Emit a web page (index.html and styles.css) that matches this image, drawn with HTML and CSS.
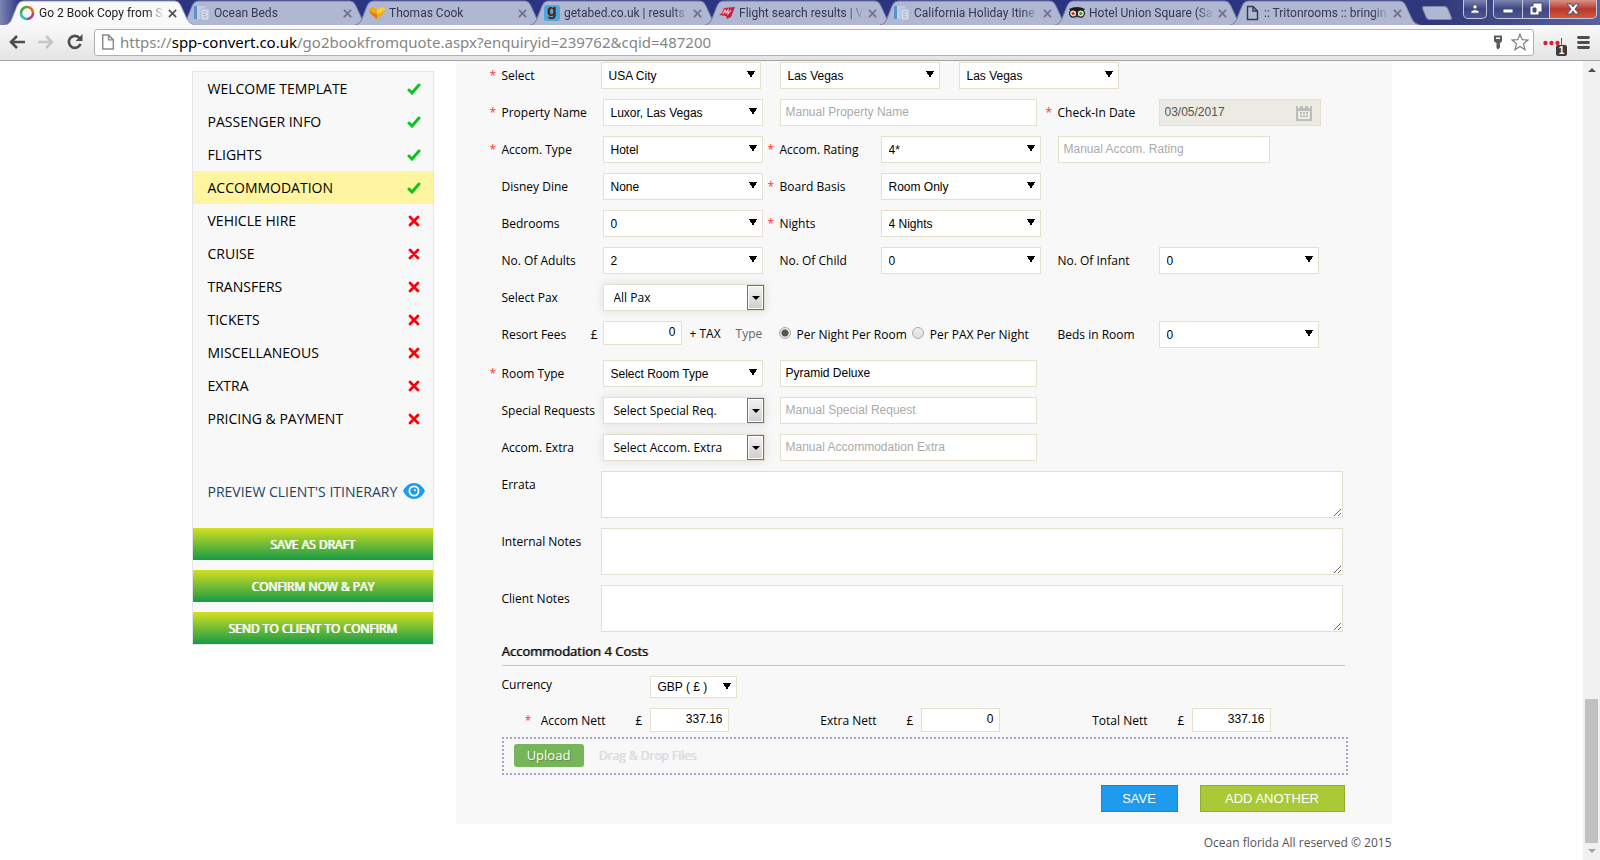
FILE: index.html
```html
<!DOCTYPE html>
<html lang="en">
<head>
  <meta charset="UTF-8">
  <meta name="viewport" content="width=device-width,initial-scale=1">
  <title>Go 2 Book Copy from Quote</title>
  <link rel="stylesheet" href="styles.css">
</head>
<body>

  <!-- Shared icons -->
  <svg class="defs" aria-hidden="true">
    <symbol id="tab-shape" viewBox="0 0 190 25">
      <path d="M0 25 C5 24 6 21 8 16 L12 6 Q14 1 18 1 H170 Q174 1 176 6 L182 19 Q184 24 190 25"/>
    </symbol>
    <symbol id="i-close" viewBox="0 0 10 10"><path d="M1 1 L9 9 M9 1 L1 9" fill="none" stroke="currentColor" stroke-width="2"/></symbol>
    <symbol id="i-doc" viewBox="0 0 16 16">
      <path d="M3.5 1.5 H9 L13.5 6 V14.5 H3.5 Z M9 1.5 V6 H13.5" fill="none" stroke="currentColor" stroke-width="1.4"/>
    </symbol>
    <symbol id="i-ocean" viewBox="0 0 16 16">
      <rect x="0" y="1" width="3" height="13" fill="#5b93c8"/>
      <rect x="3" y="1" width="8" height="13" fill="#c3cde2"/>
      <rect x="7" y="4" width="8" height="11" fill="#d3daea" stroke="#a9b5d0" stroke-width=".8"/>
      <path d="M9 7 H13 M9 9.500 H12 M9 12 H13" stroke="#a3b1cd"/>
    </symbol>
    <symbol id="i-tick" viewBox="0 0 14 12">
      <path d="M2 7 L5 10 L12 2" fill="none" stroke="#0bc41c" stroke-width="3" stroke-linecap="round"/>
    </symbol>
    <symbol id="i-cross" viewBox="0 0 14 12">
      <path d="M3 2 L11 10 M11 2 L3 10" fill="none" stroke="#fb0007" stroke-width="2.800" stroke-linecap="round"/>
    </symbol>
  </svg>

  <header class="chrome">
    <div class="tabstrip">
      <div class="tab active">
        <svg class="tab-bg"><use href="#tab-shape"/></svg>
        <svg class="fav" viewBox="0 0 16 16" fill="none" stroke-width="2.600">
          <path d="M8 2 A6 6 0 0 1 14 8" stroke="#e8632a"/><path d="M14 8 A6 6 0 0 1 8 14" stroke="#b5409a"/>
          <path d="M8 14 A6 6 0 0 1 2 8" stroke="#23c4c0"/><path d="M2 8 A6 6 0 0 1 8 2" stroke="#47a53c"/>
        </svg>
        <span class="tab-title">Go 2 Book Copy from S</span>
        <button class="tab-x" aria-label="Close tab"><svg><use href="#i-close"/></svg></button>
      </div>
      <div class="tab">
        <svg class="tab-bg"><use href="#tab-shape"/></svg>
        <svg class="fav"><use href="#i-ocean"/></svg>
        <span class="tab-title">Ocean Beds</span>
        <button class="tab-x" aria-label="Close tab"><svg><use href="#i-close"/></svg></button>
      </div>
      <div class="tab">
        <svg class="tab-bg"><use href="#tab-shape"/></svg>
        <svg class="fav" viewBox="0 0 16 16"><path d="M8 14 C4 11 0 9 0 5 Q1 2 4 2 Q7 3 8 5 Q9 3 12 2 Q16 2 16 5 C15 9 11 12 8 14Z" fill="#efaa1c"/><path d="M8 14 C5 11 1 9 0 5 Q3 8 8 9Z" fill="#dd7c1f"/><path d="M8 5 Q9 3 12 2 Q16 2 16 5 Q12 8 8 9Z" fill="#f6cf2a"/></svg>
        <span class="tab-title">Thomas Cook</span>
        <button class="tab-x" aria-label="Close tab"><svg><use href="#i-close"/></svg></button>
      </div>
      <div class="tab">
        <svg class="tab-bg"><use href="#tab-shape"/></svg>
        <span class="fav fav-g">g</span>
        <span class="tab-title">getabed.co.uk | results</span>
        <button class="tab-x" aria-label="Close tab"><svg><use href="#i-close"/></svg></button>
      </div>
      <div class="tab">
        <svg class="tab-bg"><use href="#tab-shape"/></svg>
        <svg class="fav" viewBox="0 0 16 16"><path d="M5 3 L16 2 L12 12 L8 14 L7 11 L0 10 L3 8Z" fill="#c6203f"/><path d="M4 9 L6 5 L7 8 L9 5 L9 9 L12 5" fill="none" stroke="#f3c3cc" stroke-width="1.200"/></svg>
        <span class="tab-title">Flight search results | V</span>
        <button class="tab-x" aria-label="Close tab"><svg><use href="#i-close"/></svg></button>
      </div>
      <div class="tab">
        <svg class="tab-bg"><use href="#tab-shape"/></svg>
        <svg class="fav"><use href="#i-ocean"/></svg>
        <span class="tab-title">California Holiday Itine</span>
        <button class="tab-x" aria-label="Close tab"><svg><use href="#i-close"/></svg></button>
      </div>
      <div class="tab">
        <svg class="tab-bg"><use href="#tab-shape"/></svg>
        <svg class="fav" viewBox="0 0 16 16"><path d="M0 4 Q8 0 16 4 L14 6 H2Z" fill="#1b1b1b"/><circle cx="4.200" cy="8.500" r="3.600" fill="#e8e3c5" stroke="#1b1b1b" stroke-width="1.200"/><circle cx="11.800" cy="8.500" r="3.600" fill="#e8e3c5" stroke="#1b1b1b" stroke-width="1.200"/><circle cx="4.200" cy="8.500" r="1.500" fill="#c0392b"/><circle cx="11.800" cy="8.500" r="1.500" fill="#3f8a3f"/><path d="M7 11 H9 L8 13Z" fill="#1b1b1b"/></svg>
        <span class="tab-title">Hotel Union Square (Sa</span>
        <button class="tab-x" aria-label="Close tab"><svg><use href="#i-close"/></svg></button>
      </div>
      <div class="tab">
        <svg class="tab-bg"><use href="#tab-shape"/></svg>
        <svg class="fav"><use href="#i-doc"/></svg>
        <span class="tab-title">:: Tritonrooms :: bringin</span>
        <button class="tab-x" aria-label="Close tab"><svg><use href="#i-close"/></svg></button>
      </div>
      <button class="new-tab" aria-label="New tab"></button>
      <div class="win-btns">
        <button class="win user" aria-label="User"><svg viewBox="0 0 12 12"><circle cx="6" cy="3.500" r="2.500"/><path d="M1 11 Q1 7 6 7 Q11 7 11 11Z"/></svg></button>
        <button class="win min" aria-label="Minimise"><svg viewBox="0 0 12 12"><path d="M1 6 H11 V10 H1Z"/></svg></button>
        <button class="win max" aria-label="Restore"><svg viewBox="0 0 12 12"><path d="M3 0 H12 V9 H9 V12 H0 V3 H3Z M3 5 V9 H6 V5Z" fill-rule="evenodd"/></svg></button>
        <button class="win close" aria-label="Close"><svg viewBox="0 0 12 12"><path d="M0 1 H4 L6 4 L8 1 H12 L8 6 L12 11 H8 L6 8 L4 11 H0 L4 6Z"/></svg></button>
      </div>
    </div>

    <div class="toolbar">
      <button class="nav-btn" aria-label="Back"><svg viewBox="0 0 16 16" fill="none" stroke="#4d4d4d" stroke-width="2.600"><path d="M8 2 L2 8 L8 14 M2 8 H16"/></svg></button>
      <button class="nav-btn" aria-label="Forward"><svg viewBox="0 0 16 16" fill="none" stroke="#c6c6c6" stroke-width="2.600"><path d="M8 2 L14 8 L8 14 M14 8 H0"/></svg></button>
      <button class="nav-btn" aria-label="Reload"><svg viewBox="0 0 16 16" fill="none" stroke="#4d4d4d" stroke-width="2.600"><path d="M13.500 10 A6 6 0 1 1 12.500 4"/><path d="M15.500 0 V7 H8.500Z" fill="#4d4d4d" stroke="none"/></svg></button>
      <div class="omnibox">
        <svg class="page-ico"><use href="#i-doc"/></svg>
        <div class="url">https://<b>spp-convert.co.uk</b>/go2bookfromquote.aspx?enquiryid=239762&amp;cqid=487200</div>
        <svg class="key" viewBox="0 0 10 14"><path d="M1 0 H9 V6 L7 7.500 V12 L5 14 L3.500 12.500 V7.500 L1 6Z M3 2 V3.500 H7 V2Z" fill="#5b5b5b" fill-rule="evenodd"/></svg>
        <svg class="star-ico" viewBox="0 0 18 18"><path d="M9 1.200 L11.200 6.700 L17 7.100 L12.500 10.800 L14 16.600 L9 13.400 L4 16.600 L5.500 10.800 L1 7.100 L6.800 6.700Z" fill="#fff" stroke="#7d7d7d" stroke-width="1.200"/></svg>
      </div>
      <button class="ext" aria-label="Password manager">
        <svg viewBox="0 0 20 12"><g fill="#d7262b"><circle cx="2.500" cy="7" r="2.200"/><circle cx="8.500" cy="7" r="2.200"/><circle cx="14.500" cy="7" r="2.200"/><path d="M18 2 H19 V12 H18Z"/></g></svg>
        <span class="ext-badge">1</span>
      </button>
      <button class="menu" aria-label="Menu"><svg viewBox="0 0 13 13"><path d="M1.500 1.500 H11.500 M1.500 6.500 H11.500 M1.500 11.500 H11.500" stroke="#4d4d4d" stroke-width="2.800" stroke-linecap="round"/></svg></button>
    </div>
  </header>

  <div class="viewport">
    <div class="page">
      <div class="container">

        <nav class="sidebar">
          <ul class="steps">
            <li><a href="#">WELCOME TEMPLATE</a><svg><use href="#i-tick"/></svg></li>
            <li><a href="#">PASSENGER INFO</a><svg><use href="#i-tick"/></svg></li>
            <li><a href="#">FLIGHTS</a><svg><use href="#i-tick"/></svg></li>
            <li class="current"><a href="#">ACCOMMODATION</a><svg><use href="#i-tick"/></svg></li>
            <li><a href="#">VEHICLE HIRE</a><svg><use href="#i-cross"/></svg></li>
            <li><a href="#">CRUISE</a><svg><use href="#i-cross"/></svg></li>
            <li><a href="#">TRANSFERS</a><svg><use href="#i-cross"/></svg></li>
            <li><a href="#">TICKETS</a><svg><use href="#i-cross"/></svg></li>
            <li><a href="#">MISCELLANEOUS</a><svg><use href="#i-cross"/></svg></li>
            <li><a href="#">EXTRA</a><svg><use href="#i-cross"/></svg></li>
            <li><a href="#">PRICING &amp; PAYMENT</a><svg><use href="#i-cross"/></svg></li>
          </ul>
          <a class="preview" href="#">PREVIEW CLIENT'S ITINERARY
            <svg viewBox="0 0 22 16"><path d="M0 8 Q4 0 11 0 Q18 0 22 8 Q18 16 11 16 Q4 16 0 8Z" fill="#1e9bec"/><circle cx="11" cy="8" r="4.600" fill="none" stroke="#fff" stroke-width="1.800"/><circle cx="11" cy="8" r="2.800" fill="#1e9bec"/><path d="M11 8 V6 A2 2 0 0 1 13 8Z" fill="#fff"/></svg>
          </a>
          <button class="side-btn">SAVE AS DRAFT</button>
          <button class="side-btn">CONFIRM NOW &amp; PAY</button>
          <button class="side-btn">SEND TO CLIENT TO CONFIRM</button>
        </nav>

        <div class="main">
          <form class="panel">
            <div class="row row-top">
              <label for="country"><i>*</i>Select</label>
              <select id="country"><option>USA City</option></select>
              <select aria-label="City"><option>Las Vegas</option></select>
              <select aria-label="Resort"><option>Las Vegas</option></select>
            </div>

            <div class="row">
              <label for="property"><i>*</i>Property Name</label>
              <select id="property"><option>Luxor, Las Vegas</option></select>
              <input class="manual" type="text" aria-label="Manual Property Name" placeholder="Manual Property Name">
              <label for="checkin"><i>*</i>Check-In Date</label>
              <div class="date">
                <input id="checkin" type="text" value="03/05/2017" disabled>
                <svg viewBox="0 0 16 16"><path d="M0 1 H2 V3 H4 V1 H7 V3 H9 V1 H12 V3 H14 V1 H16 V16 H0Z M2 6 V14 H14 V6Z" fill="#bdbdb9" fill-rule="evenodd"/><path d="M4 7h2v2H4zM7 7h2v2H7zM10 7h2v2h-2zM4 10h2v2H4zM7 10h2v2H7zM10 10h2v2h-2z" fill="#bdbdb9"/></svg>
              </div>
            </div>

            <div class="row">
              <label for="type"><i>*</i>Accom. Type</label>
              <select id="type"><option>Hotel</option></select>
              <label for="rating"><i>*</i>Accom. Rating</label>
              <select id="rating"><option>4*</option></select>
              <input class="manual short" type="text" aria-label="Manual Accom. Rating" placeholder="Manual Accom. Rating">
            </div>

            <div class="row">
              <label for="dine"><i></i>Disney Dine</label>
              <select id="dine"><option>None</option></select>
              <label for="board"><i>*</i>Board Basis</label>
              <select id="board"><option>Room Only</option></select>
            </div>

            <div class="row">
              <label for="bedrooms"><i></i>Bedrooms</label>
              <select id="bedrooms"><option>0</option></select>
              <label for="nights"><i>*</i>Nights</label>
              <select id="nights"><option>4 Nights</option></select>
            </div>

            <div class="row">
              <label for="adults"><i></i>No. Of Adults</label>
              <select id="adults"><option>2</option></select>
              <label for="child"><i></i>No. Of Child</label>
              <select id="child"><option>0</option></select>
              <label for="infant"><i></i>No. Of Infant</label>
              <select id="infant"><option>0</option></select>
            </div>

            <div class="row">
              <label for="pax"><i></i>Select Pax</label>
              <div class="combo"><input id="pax" type="text" value="All Pax"><button type="button" aria-label="Open list"></button></div>
            </div>

            <div class="row row-fees">
              <label for="fees"><i></i>Resort Fees<span class="pound">£</span></label>
              <div class="fees"><input id="fees" class="num" type="text" value="0"><span>+ TAX</span><span class="muted">Type</span></div>
              <div class="radios">
                <input id="per-room" type="radio" name="fee" checked><label for="per-room">Per Night Per Room</label>
                <input id="per-pax" type="radio" name="fee"><label for="per-pax">Per PAX Per Night</label>
              </div>
              <label for="beds"><i></i>Beds in Room</label>
              <select id="beds"><option>0</option></select>
            </div>

            <div class="row">
              <label for="room"><i>*</i>Room Type</label>
              <select id="room"><option>Select Room Type</option></select>
              <input class="manual" type="text" aria-label="Room name" value="Pyramid Deluxe">
            </div>

            <div class="row">
              <label for="special"><i></i>Special Requests</label>
              <div class="combo"><input id="special" type="text" value="Select Special Req."><button type="button" aria-label="Open list"></button></div>
              <input class="manual" type="text" aria-label="Manual Special Request" placeholder="Manual Special Request">
            </div>

            <div class="row">
              <label for="extra"><i></i>Accom. Extra</label>
              <div class="combo"><input id="extra" type="text" value="Select Accom. Extra"><button type="button" aria-label="Open list"></button></div>
              <input class="manual" type="text" aria-label="Manual Accommodation Extra" placeholder="Manual Accommodation Extra">
            </div>

            <div class="note"><label for="errata">Errata</label><textarea id="errata"></textarea></div>
            <div class="note"><label for="internal">Internal Notes</label><textarea id="internal"></textarea></div>
            <div class="note"><label for="client">Client Notes</label><textarea id="client"></textarea></div>

            <h2>Accommodation 4 Costs</h2>

            <div class="currency">
              <label for="currency">Currency</label>
              <select id="currency"><option>GBP ( £ )</option></select>
            </div>

            <div class="costs">
              <div class="cost"><label for="c1"><i>*</i>Accom Nett</label><span>£</span><input id="c1" class="num" type="text" value="337.16"></div>
              <div class="cost"><label for="c2">Extra Nett</label><span>£</span><input id="c2" class="num" type="text" value="0"></div>
              <div class="cost"><label for="c3">Total Nett</label><span>£</span><input id="c3" class="num" type="text" value="337.16"></div>
            </div>

            <div class="drop">
              <button type="button" class="upload">Upload</button>
              <span>Drag &amp; Drop Files</span>
            </div>

            <div class="actions">
              <button type="button" class="save">SAVE</button>
              <button type="button" class="add">ADD ANOTHER</button>
            </div>
          </form>
          <footer>Ocean florida All reserved © 2015</footer>
        </div>

      </div>
    </div>

    <!-- Scroll bar -->
    <div class="scrollbar">
      <span class="arrow up"></span>
      <span class="thumb"></span>
      <span class="arrow down"></span>
    </div>
  </div>

</body>
</html>
```

FILE: styles.css
```css
*{margin:0;padding:0;box-sizing:border-box;}
body{
  height:100vh; overflow:hidden;
  display:flex; flex-direction:column;
  font-family:"Open Sans","Noto Sans",sans-serif;
  font-size:12px; color:#000; background:#fff;
}
button{border:none;background:none;font:inherit;cursor:pointer;}
a{color:inherit;text-decoration:none;}
ul{list-style:none;}
svg{display:block;}
.defs{position:absolute;width:0;height:0;}

/* Browser window */
.chrome{flex:none;border-bottom:1px solid #a5a3a6;}
.tabstrip{
  display:flex; height:25px; padding-left:5px;
  background:linear-gradient(90deg,#7f85b5 0,#2b3580 20px,#2a3480 1380px,#323a7a 1440px,#5a629c 100%);
}
.tab{
  position:relative; flex:none; width:190px; margin-right:-15px;
  display:flex; align-items:center; padding:1px 18px 0 14px;
  font-family:Roboto,"Open Sans",sans-serif; color:#33384f;
}
.tab-bg{
  position:absolute; left:0; top:0; width:190px; height:25px;
  fill:#b0b7d2; stroke:#737ba3; stroke-width:1;
}
.tab.active{z-index:2;color:#222;}
.tab.active .tab-bg{fill:#f9f9fa;stroke:#9a9fb8;}
.fav{position:relative;flex:none;width:16px;height:16px;}
.fav-g{
  border-radius:3px; background:#4fa6d8; color:#4a2018;
  font:bold 16px/12px "Liberation Sans",sans-serif; text-align:center;
}
.tab-title{
  position:relative; flex:1; margin-left:4px; overflow:hidden; white-space:nowrap;
  -webkit-mask-image:linear-gradient(90deg,#000 calc(100% - 16px),transparent);
  mask-image:linear-gradient(90deg,#000 calc(100% - 16px),transparent);
}
.tab-x{position:relative;margin-left:4px;color:#6f748c;}
.tab.active .tab-x{color:#555;}
.tab-x svg{width:9px;height:9px;}
.new-tab{
  width:26px; height:14px; margin:6px 0 0 28px;
  background:#b0b7d2; border:1px solid #8088b2;
  border-radius:3px; transform:skewX(22deg);
}
.tab + .new-tab{margin-left:19px;}
.win-btns{display:flex;margin-left:auto;padding-right:3px;height:19px;}
.win{
  display:flex; align-items:center; justify-content:center;
  border:1px solid #c2c5de; border-top:none;
  background:linear-gradient(#7d84ae,#3d4684 50%,#4d5692);
}
.win svg{width:12px;height:12px;fill:#fff;stroke:#4a4f6e;stroke-width:1;overflow:visible;}
.user{width:24px;margin-right:6px;border-radius:0 0 5px 5px;}
.user svg{width:10px;height:10px;}
.min{width:30px;border-radius:0 0 0 5px;}
.max{width:27px;border-left:none;}
.close{
  width:47px; border-left:none; border-radius:0 0 5px 0;
  background:linear-gradient(#d8928a,#b8392a 50%,#cf5a3a);
}

.toolbar{
  display:flex; align-items:center; height:35px; padding:0 10px 1px 9px;
  background:linear-gradient(#f9f9fa,#e4e4e4);
}
.nav-btn{margin-right:13px;}
.nav-btn svg{width:16px;height:16px;}
.omnibox{
  flex:1; display:flex; align-items:center; height:27px; margin-left:-2px;
  padding:0 4px; border:1px solid #b0b0b0; border-radius:3px; background:#fff;
}
.page-ico{width:17px;height:18px;color:#8a8a8a;}
.url{flex:1;margin-left:4px;font:15px "Noto Sans","Open Sans",sans-serif;color:#868686;white-space:nowrap;}
.url b{font-weight:normal;color:#000;}
.key{width:10px;height:15px;margin-right:8px;}
.star-ico{width:18px;height:18px;}
.ext{position:relative;margin-left:9px;}
.ext svg{width:20px;height:12px;}
.ext-badge{
  position:absolute; left:13px; top:9px; width:11px; height:11px;
  border-radius:2px; background:#3c3c3c; color:#fff;
  font:bold 10px/11px "Liberation Sans",sans-serif; text-align:center;
}
.menu{margin-left:14px;}
.menu svg{width:13px;height:13px;}

/* Page */
.viewport{flex:1;display:flex;min-height:0;}
.page{flex:1;overflow:hidden;}
.container{
  max-width:1200px; margin:0 auto;
  display:flex; align-items:flex-start; justify-content:space-between;
}

.sidebar{
  width:242px; margin-top:10px;
  border:1px solid #e5e5e5; background:#f8f8f8;
}
.steps li{
  display:flex; align-items:center; justify-content:space-between;
  height:33px; padding:0 12px 0 15px; font-size:14px;
}
.steps svg{width:14px;height:12px;}
.steps .current{background:#fff49f;}
.preview{
  display:flex; align-items:center; justify-content:space-between;
  height:32px; margin:40px 8px 21px 15px;
  font-size:14px; color:#1c4461; white-space:nowrap;
}
.preview svg{width:22px;height:16px;}
.side-btn{
  display:block; width:100%; height:32px;
  background:linear-gradient(#d3df20,#179a48);
  color:#fff; text-shadow:1px 0 #fff;
}
.side-btn + .side-btn{margin-top:10px;}

.main{width:936px;}
.panel{padding:1px 47px 12px 34px;background:#f8f8f8;}

.row{
  display:grid; grid-template-columns:113px 165px 113px 165px 113px 1fr;
  align-items:center; height:27px; margin-bottom:10px;
}
.row-top{grid-template-columns:111px 179px 179px 1fr;}
.row-fees{margin-bottom:12px;}
label{white-space:nowrap;}
.row > label{display:flex;}
label i{flex:none;width:12px;color:#f33;font-style:normal;}

input,select,textarea{
  border:1px solid #e5e0cb; background:#fff;
  font:12px "Liberation Sans",Arial,sans-serif; color:#000;
}
select{
  appearance:none; width:160px; height:27px; padding:0 16px 0 7px;
  /* down arrow from two triangles */
  background:
    linear-gradient(to top right,transparent 50%,#000 50%) right 9px top calc(50% - 1px)/4px 7px no-repeat,
    linear-gradient(to top left,transparent 50%,#000 50%) right 5px top calc(50% - 1px)/4px 7px no-repeat,
    #fff;
}
input[type=text]{height:27px;padding:0 5px 2px;}
::placeholder{color:#aaa;opacity:1;}
.manual{grid-column:span 2;width:257px;margin-left:12px;}
.manual.short{width:212px;}
.date{position:relative;width:162px;}
.date input{display:block;width:100%;background:#ebeae3;color:#555;}
.date svg{position:absolute;right:9px;top:6px;width:16px;height:16px;}

.combo{display:flex;width:162px;height:27px;border:1px solid #e5e0cb;background:#fff;box-shadow:0 0 10px #ddd;}
.combo input[type=text]{flex:1;min-width:0;height:25px;border:none;padding:0 10px;font-family:"Open Sans",sans-serif;}
.combo button{
  position:relative; width:17px; border:1px solid #707070;
  box-shadow:inset 0 0 0 1px #fff; background:linear-gradient(#f2f2f2,#cfcfcf);
}
.combo button::after{
  content:""; position:absolute; left:4px; top:10px;
  border:4px solid transparent; border-top-color:#000; border-bottom:none;
}

.pound{margin-left:auto;padding-right:5px;}
.fees{display:flex;align-items:center;align-self:start;}
.fees span{margin-left:8px;}
.fees .muted{margin-left:15px;color:#666;}
input.num{flex:none;width:79px;height:24px;text-align:right;}
.radios{grid-column:span 2;display:flex;align-items:center;padding-left:11px;white-space:nowrap;}
.radios input{
  appearance:none; width:12px; height:12px; margin:0 6px 4px 0;
  border:1px solid #aaa; border-radius:50%;
  background:linear-gradient(#eee,#ddd);
}
.radios input:checked{background:radial-gradient(#555 3px,#e6e6e6 4px);}
.radios label{margin-right:5px;}

.note{display:flex;justify-content:space-between;margin:0 2px 10px 12px;}
.note label{padding-top:5px;}
.note textarea{display:block;width:742px;height:47px;}

h2{
  margin:0 0 10px 12px; padding:1px 0 5px;
  border-bottom:1px solid #c4c4c4;
  font-size:13px; line-height:17px; font-weight:normal;
  text-shadow:1px 0 #777;
}
.currency{display:flex;align-items:flex-start;margin:0 0 10px 12px;}
.currency label{width:148px;}
.currency select{width:87px;height:22px;}
.costs{display:flex;height:24px;padding-left:35px;}
.cost{display:flex;align-items:center;width:271px;}
.cost label{display:flex;justify-content:flex-end;width:111px;padding-right:30px;}
.cost label i{width:16px;}
.cost span{width:14px;}

.drop{
  display:flex; align-items:center; height:38px;
  margin:5px -3px 10px 12px; padding:0 0 2px 10px;
  border:2px dotted #a9a3cf;
}
.upload{
  width:70px; height:23px; border-radius:3px; background:#77b55a;
  color:#fff; font-size:13px; text-shadow:1px 1px 1px #5b8a3c;
}
.drop span{margin-left:15px;color:#dcdde3;text-shadow:1px 0 #dcdde3;}
.actions{display:flex;justify-content:flex-end;gap:22px;}
.actions button{height:27px;color:#fff;font:13px "Liberation Sans",Arial,sans-serif;}
.save{width:77px;border:1px solid #1c86cb;background:#1e9bec;}
.add{width:145px;border:1px solid #8fae2b;background:#a9ca36;}
footer{padding-top:10px;color:#555;text-align:right;}

.scrollbar{
  display:flex; flex-direction:column; align-items:center;
  width:17px; padding:7px 0; background:#f1f1f1;
}
.thumb{width:13px;height:144px;margin-top:auto;margin-bottom:6px;background:#c1c1c1;}
.arrow{border:4px solid transparent;}
.up{border-top:none;border-bottom-color:#505050;}
.down{border-bottom:none;border-top-color:#a3a3a3;}
```
